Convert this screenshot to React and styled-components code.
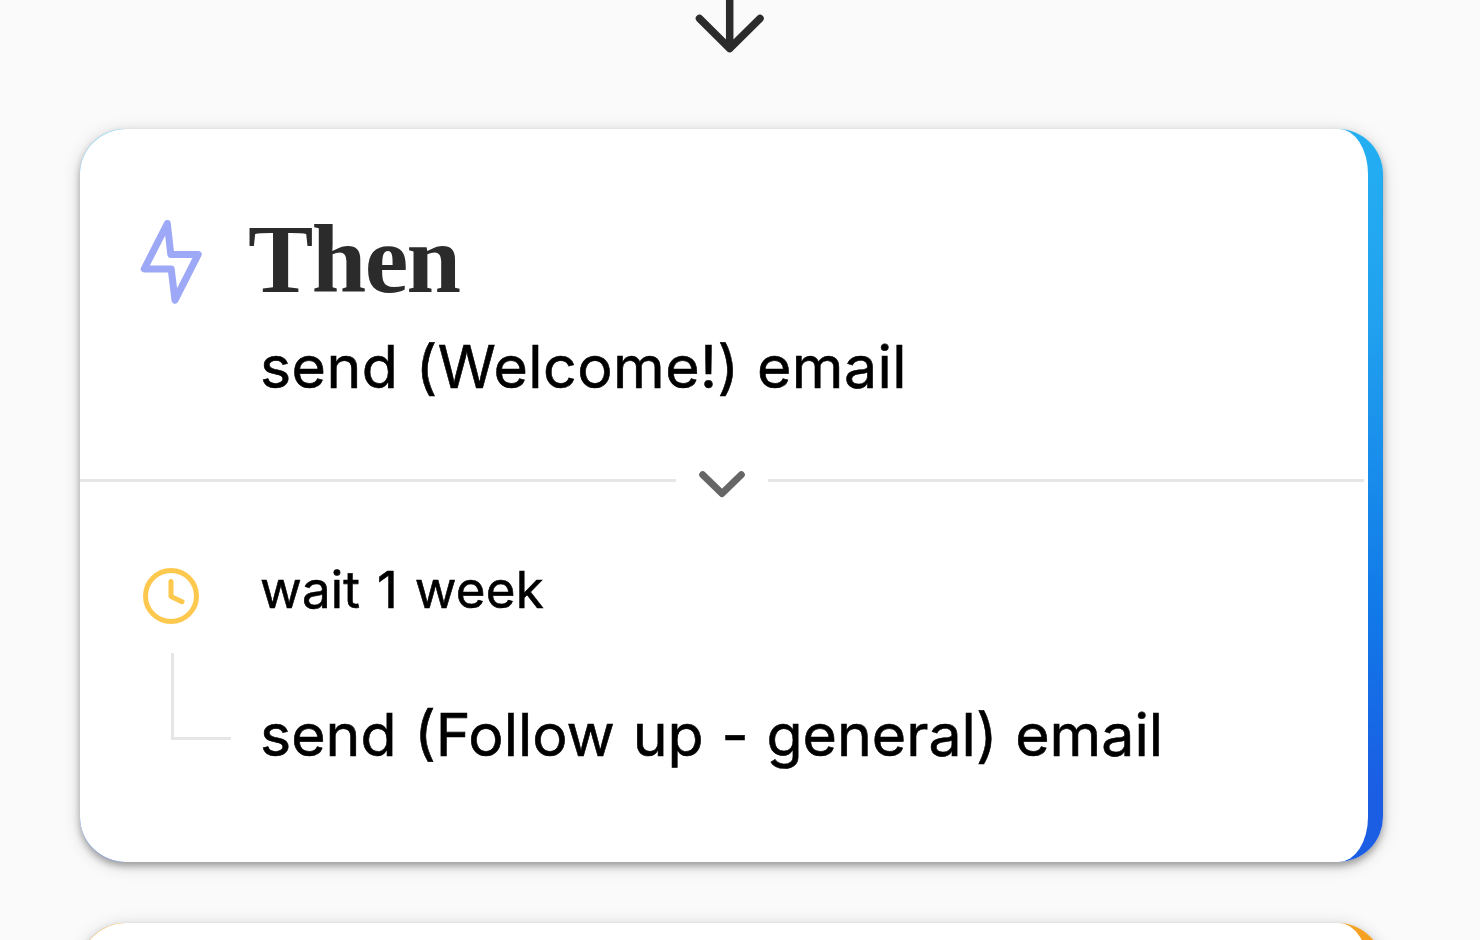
import React from "react";
import styled, { createGlobalStyle } from "styled-components";

const GlobalStyle = createGlobalStyle`
  * {
    box-sizing: border-box;
  }

  body {
    margin: 0;
    background-color: #fafafa;
    overflow: hidden;
  }
`;

const Page = styled.main`
  height: 940px;
  display: flex;
  flex-direction: column;
  align-items: flex-start;
  padding-left: 80px;
  overflow: hidden;
  background-color: #fafafa;
  color: #000;
  font-family: Inter, "Liberation Sans", sans-serif;
`;

const ArrowRow = styled.div`
  height: 129px;
  width: 1299px;
  flex: none;
  display: flex;
  justify-content: center;
`;

const Card = styled.section`
  width: 1303px;
  height: ${(props) => props.$height}px;
  flex: none;
  margin-bottom: 61px;
  padding-right: 15px;
  border-radius: 45px;
  background: ${(props) => props.$accent};
  box-shadow: 0 4px 7px rgba(0, 0, 0, 0.3), 0 3px 18px rgba(0, 0, 0, 0.16);
`;

const CardBody = styled.div`
  height: 100%;
  border-radius: 46px 29px 29px 46px / 45px;
  background-color: #fff;
`;

const Header = styled.header`
  height: 341px;
  display: grid;
  grid-template-columns: 168px 1fr;
  grid-template-rows: 192px 1fr;
`;

const IconCell = styled.div`
  padding: ${(props) => props.$top}px 0 0 ${(props) => props.$left}px;

  & svg {
    display: block;
  }
`;

const Title = styled.h1`
  margin: 0;
  padding-top: 76px;
  color: #2b2b2b;
  font-family: "Liberation Serif", serif;
  font-size: 98px;
  line-height: 108px;
  font-weight: 700;
  letter-spacing: -1.6px;
  white-space: nowrap;
`;

const Action = styled.p`
  grid-column: 2;
  margin: 0;
  padding: ${(props) => props.$top || 0}px 0 0 12px;
  font-size: ${(props) => props.$size || 59}px;
  line-height: 72px;
  font-weight: 400;
  -webkit-text-stroke: 0.6px #000;
  letter-spacing: ${(props) => props.$spacing || 0}px;
  word-spacing: ${(props) => props.$words || 0}px;
  white-space: nowrap;
`;

const Divider = styled.div`
  height: 28px;
  width: 1284px;
  display: flex;
  justify-content: space-between;
`;

const Line = styled.span`
  height: 3px;
  width: 596px;
  margin-top: 9px;
  background-color: #e6e6e6;
`;

const Steps = styled.div`
  display: grid;
  grid-template-columns: 168px 1fr;
  grid-template-rows: 155px 1fr;
`;

const Elbow = styled.div`
  width: 60px;
  height: 87px;
  margin-left: 91px;
  border-left: 3.5px solid #e6e6e6;
  border-bottom: 3.5px solid #e6e6e6;
`;

const Icon = styled.svg`
  fill: none;
  stroke: ${(props) => props.$color};
  stroke-width: ${(props) => props.$stroke}px;
  stroke-linecap: round;
  stroke-linejoin: round;
  flex: none;
`;

const ArrowDown = () => (
  <Icon width="74" height="60" viewBox="0 0 74 60" $color="#2b2b2b" $stroke={7.5}>
    <path d="M36.7 -8V48.5M6.5 18.5L36.7 48.5L67 18.5" />
  </Icon>
);

const Bolt = () => (
  <Icon width="64" height="90" viewBox="0 0 64 90" $color="#9da8f7" $stroke={7}>
    <path d="M27.3 7.6L4.2 53H31.2L35 84.2L58.2 38.4H30.8Z" />
  </Icon>
);

const Chevron = () => (
  <Icon width="52" height="36" viewBox="0 0 52 36" $color="#666" $stroke={7}>
    <path d="M6.7 4.8L26 23.6L45.3 4.8" />
  </Icon>
);

const Clock = () => (
  <Icon width="60" height="60" viewBox="0 0 60 60" $color="#fdc84e" $stroke={5}>
    <circle cx="30" cy="30" r="25.5" />
    <path d="M30 15.5V30.5L41 35.7" />
  </Icon>
);

const App = () => {
  return (
    <>
      <GlobalStyle />
      <Page>
        <ArrowRow>
          <ArrowDown />
        </ArrowRow>

        <Card
          $height={733}
          $accent="linear-gradient(#24aff2, #21a2ef 25%, #1179e8 66%, #1b5ee4 90%)"
        >
          <CardBody>
            <Header>
              <IconCell $top={87} $left={60}>
                <Bolt />
              </IconCell>
              <Title>Then</Title>
              <Action $top={10} $spacing={0.45} $words={0.5}>
                send (Welcome!) email
              </Action>
            </Header>

            <Divider>
              <Line />
              <Chevron />
              <Line />
            </Divider>

            <Steps>
              <IconCell $top={68} $left={61}>
                <Clock />
              </IconCell>
              <Action $top={56} $size={51} $spacing={0.2} $words={2.3}>
                wait 1 week
              </Action>
              <Elbow />
              <Action $top={46} $words={1.2}>
                send (Follow up - general) email
              </Action>
            </Steps>
          </CardBody>
        </Card>

        <Card $height={733} $accent="linear-gradient(#f5a123, #ed7d1c)">
          <CardBody />
        </Card>
      </Page>
    </>
  );
};

export default App;
